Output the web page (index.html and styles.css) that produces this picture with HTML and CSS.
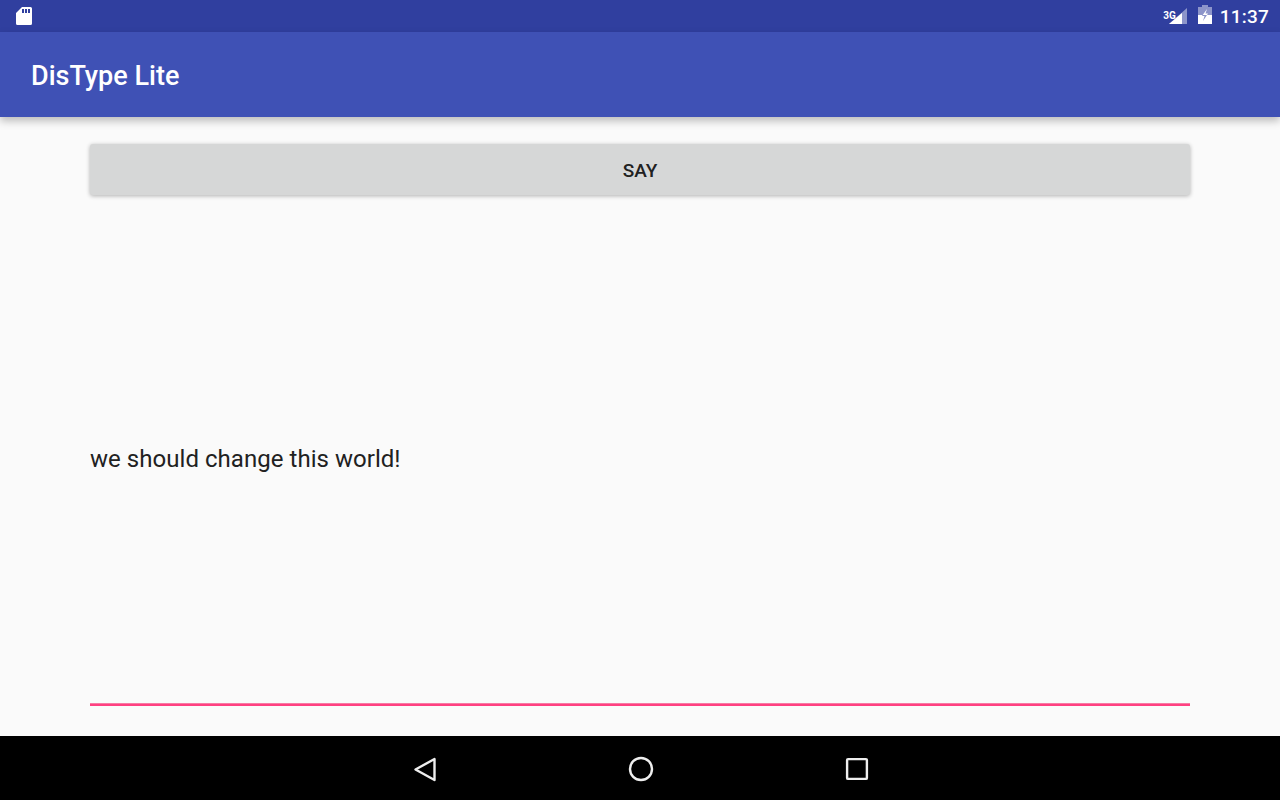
FILE: index.html
```html
<!DOCTYPE html>
<html lang="en">
<head>
  <meta charset="UTF-8" />
  <meta name="viewport" content="width=device-width, initial-scale=1.0"/>
  <title>DisType Lite</title>
  <link rel="stylesheet" href="styles.css">
</head>
<body>

<div class="status-bar">
  <svg width="18" height="20" viewBox="0 0 18 20">
    <path fill="#fff" fill-rule="evenodd" d="M7 1H15.5A1.5 1.5 0 0 1 17 2.5V17.5A1.5 1.5 0 0 1 15.5 19H2.5A1.5 1.5 0 0 1 1 17.5V7ZM7 3V7H9V3ZM10 3V7H12V3ZM13 3V7H15V3Z"/>
  </svg>
  <div class="status-right">
    <span class="net-type">3G</span>
    <svg class="signal-icon" width="20" height="18" viewBox="0 0 20 18">
      <path fill="#fff" fill-opacity="0.45" d="M18 1V17H0Z"/>
      <path fill="#fff" d="M13 6V17H0Z"/>
    </svg>
    <svg class="battery-icon" width="14" height="20" viewBox="0 0 14 20">
      <path fill="#fff" fill-opacity="0.45" d="M4 0H10V2H14V19H0V2H4Z"/>
      <path fill="#fff" fill-rule="evenodd" d="M0 10H14V19H0ZM4.7 10 4 11H6.5L5 16 9 10Z"/>
      <path fill="#fff" d="M9 4 4.7 10H9L10 8.5H7.5Z"/>
    </svg>
    <span class="clock">11:37</span>
  </div>
</div>

<header class="app-bar">
  <h1>DisType Lite</h1>
</header>

<main>
  <button class="say-btn">SAY</button>
  <div class="output">
    <p>we should change this world!</p>
  </div>
  <div class="input-line"></div>
</main>

<nav class="nav-bar">
  <svg width="26" height="26" viewBox="0 0 26 26">
    <path fill="none" stroke="#eee" stroke-width="2.4" stroke-linejoin="round" d="M22.5 3V24L3.5 13.5Z"/>
  </svg>
  <svg width="26" height="26" viewBox="0 0 26 26">
    <circle cx="13" cy="13" r="11" fill="none" stroke="#eee" stroke-width="2.4"/>
  </svg>
  <svg width="26" height="26" viewBox="0 0 26 26">
    <rect x="3.1" y="3.1" width="19.8" height="19.8" rx="1" fill="none" stroke="#eee" stroke-width="2.4"/>
  </svg>
</nav>

</body>
</html>
```

FILE: styles.css
```css
:root {
  --primary: #3f51b5;
  --primary-dark: #303f9f;
  --accent: #ff4081;
  --bg: #fafafa;
  --text: #212121;
}

* {
  margin: 0;
  padding: 0;
  box-sizing: border-box;
  font-family: Roboto, 'Noto Sans', sans-serif;
}

body {
  width: 1280px;
  height: 800px;
  overflow: hidden;
  display: flex;
  flex-direction: column;
  background-color: var(--bg);
  color: var(--text);
}

.status-bar {
  height: 32px;
  flex-shrink: 0;
  display: flex;
  align-items: center;
  justify-content: space-between;
  padding: 0 11px 0 15px;
  background-color: var(--primary-dark);
  color: #fff;
}

.status-right {
  display: flex;
  align-items: center;
}

.net-type {
  font-size: 10px;
  font-weight: 700;
  align-self: flex-start;
  margin-top: 5px;
  margin-right: -7px;
}

.signal-icon {
  margin-right: 9px;
}

.battery-icon {
  margin-top: -2px;
  margin-right: 8px;
}

.clock {
  font-size: 19px;
  font-weight: 500;
  letter-spacing: 0.2px;
}

.app-bar {
  height: 85px;
  flex-shrink: 0;
  display: flex;
  align-items: center;
  padding: 0 31px;
  background-color: var(--primary);
  box-shadow: 0 4px 8px rgba(0, 0, 0, 0.25);
  position: relative;
}

.app-bar h1 {
  font-size: 27px;
  font-weight: 500;
  color: #fff;
  margin-top: 2px;
}

main {
  flex-grow: 1;
  display: flex;
  flex-direction: column;
  padding: 27px 90px 30px;
}

.say-btn {
  height: 51px;
  flex-shrink: 0;
  padding-top: 2px;
  border: none;
  border-radius: 3px;
  background-color: #d6d7d7;
  color: var(--text);
  font-size: 19px;
  font-weight: 500;
  box-shadow: 0 1px 4px rgba(0, 0, 0, 0.3);
}

.output {
  flex-grow: 1;
  display: flex;
  align-items: center;
  padding-top: 20px;
}

.output p {
  font-size: 24px;
  letter-spacing: 0.04px;
}

.input-line {
  height: 3px;
  border-top: 1px solid #f77aa3;
  background-color: var(--accent);
}

.nav-bar {
  height: 64px;
  flex-shrink: 0;
  display: flex;
  align-items: center;
  justify-content: center;
  gap: 190px;
  padding: 1px 0 0 1px;
  background-color: #000;
}
```
